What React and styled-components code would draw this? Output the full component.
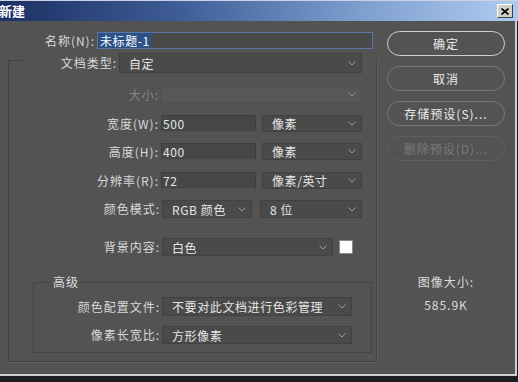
import React from "react";
import styled, { createGlobalStyle } from "styled-components";

const GlobalStyle = createGlobalStyle`
  html, body {
    margin: 0;
    padding: 0;
    background: #1f1f1f;
  }
  body {
    font-family: "Noto Sans CJK SC", "Noto Sans", sans-serif;
    font-size: 12px;
  }
`;

const Win = styled.div`
  width: 518px;
  height: 382px;
  display: flex;
  flex-direction: column;
  overflow: hidden;
  background: #1f1f1f;
`;

const TitleBar = styled.div`
  height: 21px;
  flex: none;
  box-sizing: border-box;
  border-top: 1px solid #c9d3e3;
  display: flex;
  align-items: center;
  justify-content: space-between;
  padding-right: 5px;
  background: linear-gradient(90deg, #1c3063 0%, #3f5d97 35%, #7f9fd0 70%, #aecbef 100%);
`;

const Title = styled.span`
  color: #fff;
  font-weight: bold;
  font-size: 13px;
  line-height: 16px;
  margin-left: -1px;
`;

const CloseBtn = styled.div`
  width: 16px;
  height: 14px;
  box-sizing: border-box;
  background: #d4d0c8;
  border: 1px solid;
  border-color: #ffffff #404040 #404040 #ffffff;
  display: flex;
  align-items: center;
  justify-content: center;
`;

const Body = styled.div`
  width: 517px;
  height: 355px;
  flex: none;
  box-sizing: border-box;
  background: #535353;
  border-right: 2px solid #cfcfcf;
  border-bottom: 2px solid #cfcfcf;
  display: flex;
`;

const FormCol = styled.div`
  width: 380px;
  flex: none;
  display: flex;
  flex-direction: column;
`;

const SideCol = styled.div`
  flex: 1;
  display: flex;
  flex-direction: column;
  padding-left: 7px;
`;

const Row = styled.div`
  display: flex;
  align-items: center;
  height: ${(p) => p.$h || 17}px;
  margin-top: ${(p) => p.$mt || 0}px;
`;

const Label = styled.div`
  width: ${(p) => p.$w}px;
  flex: none;
  margin-right: 2px;
  text-align: right;
  white-space: nowrap;
  line-height: 16px;
  letter-spacing: 1px;
  color: ${(p) => (p.$disabled ? "#858585" : "#d8d8d8")};
`;

const Field = styled.div`
  width: ${(p) => p.$w}px;
  height: 100%;
  flex: none;
  box-sizing: border-box;
  background: #474747;
  border: 1px solid #3e3e3e;
  border-bottom-color: #4f4f4f;
  color: #e6e6e6;
  padding-left: 1px;
  display: flex;
  align-items: center;
  line-height: 15px;
  letter-spacing: 0.6px;
`;

const NameField = styled(Field)`
  background: #4a4a4a;
  border: 1px solid #5877a8;
`;

const Selected = styled.span`
  background: #2d5288;
  color: #fff;
  padding: 0 1px;
`;

const Select = styled.div`
  width: ${(p) => p.$w}px;
  height: 100%;
  flex: none;
  box-sizing: border-box;
  margin-left: ${(p) => p.$ml || 0}px;
  background: ${(p) => (p.$disabled ? "#575757" : "#4a4a4a")};
  border: 1px solid ${(p) => (p.$disabled ? "#505050" : "#414141")};
  color: #e6e6e6;
  padding: 0 5px 0 9px;
  display: flex;
  align-items: center;
  justify-content: space-between;
  line-height: 15px;
  letter-spacing: 0.6px;
  white-space: nowrap;
`;

const Swatch = styled.div`
  width: 14px;
  height: 14px;
  margin-left: 6px;
  background: #fff;
  border: 1px solid #8a8a8a;
  box-sizing: border-box;
`;

const Group = styled.div`
  position: relative;
  margin: 11px 0 0 8px;
  width: 369px;
  box-sizing: border-box;
  border: 1px solid #444;
  border-top: none;
  box-shadow: 1px 1px 0 #5f5f5f;
  padding-bottom: 8px;
  &::before {
    content: "";
    position: absolute;
    top: 0;
    left: -1px;
    width: 14px;
    height: 1px;
    background: #444;
  }
`;

const Fieldset = styled.fieldset`
  margin: 18px 4px 0 24px;
  padding: 0 0 8px 0;
  border: 1px solid #454545;
  min-width: 0;
`;

const Legend = styled.legend`
  margin-left: 17px;
  padding: 0 2px;
  color: #dcdcdc;
  line-height: 16px;
  letter-spacing: 1px;
`;

const Button = styled.div`
  width: 118px;
  height: 25px;
  box-sizing: border-box;
  margin-top: ${(p) => p.$mt || 10}px;
  border-radius: 13px;
  border: ${(p) => (p.$primary ? "1.5px solid #cfcfcf" : p.$disabled ? "1px solid #5e5e5e" : "1px solid #777")};
  color: ${(p) => (p.$disabled ? "#7a7a7a" : "#ececec")};
  display: flex;
  align-items: center;
  justify-content: center;
  line-height: 16px;
  letter-spacing: 1px;
`;

const Info = styled.div`
  width: 118px;
  text-align: center;
  color: #dcdcdc;
  line-height: 16px;
  letter-spacing: 1px;
  margin-top: ${(p) => p.$mt}px;
`;

const Chevron = () => (
  <svg width="8" height="5" viewBox="0 0 8 5">
    <polyline points="0.5,0.5 4,4 7.5,0.5" fill="none" stroke="#9c9c9c" strokeWidth="1" />
  </svg>
);

const Drop = ({ w, ml, disabled, children }) => (
  <Select $w={w} $ml={ml} $disabled={disabled}>
    <span>{children}</span>
    <Chevron />
  </Select>
);

export default function App() {
  return (
    <Win>
      <GlobalStyle />
      <TitleBar>
        <Title>新建</Title>
        <CloseBtn>
          <svg width="8" height="7" viewBox="0 0 8 7">
            <path d="M0.5 0.5 L7.5 6.5 M7.5 0.5 L0.5 6.5" stroke="#000" strokeWidth="1.6" />
          </svg>
        </CloseBtn>
      </TitleBar>
      <Body>
        <FormCol>
          <Row $mt={11} $h={17}>
            <Label $w={95}>名称(N):</Label>
            <NameField $w={276}>
              <Selected>未标题-1</Selected>
            </NameField>
          </Row>
          <Group>
            <Row $mt={-7} $h={20}>
              <Label $w={108}>文档类型:</Label>
              <Drop w={243}>自定</Drop>
            </Row>
            <Row $mt={13}>
              <Label $w={150} $disabled>大小:</Label>
              <Drop w={201} disabled></Drop>
            </Row>
            <Row $mt={12}>
              <Label $w={150}>宽度(W):</Label>
              <Field $w={95}>500</Field>
              <Drop w={100} ml={6}>像素</Drop>
            </Row>
            <Row $mt={11}>
              <Label $w={150}>高度(H):</Label>
              <Field $w={95}>400</Field>
              <Drop w={100} ml={6}>像素</Drop>
            </Row>
            <Row $mt={12}>
              <Label $w={150}>分辨率(R):</Label>
              <Field $w={95}>72</Field>
              <Drop w={100} ml={6}>像素/英寸</Drop>
            </Row>
            <Row $mt={11} $h={18}>
              <Label $w={151}>颜色模式:</Label>
              <Drop w={90}>RGB 颜色</Drop>
              <Drop w={102} ml={8}>8 位</Drop>
            </Row>
            <Row $mt={20} $h={18}>
              <Label $w={151}>背景内容:</Label>
              <Drop w={171}>白色</Drop>
              <Swatch />
            </Row>
            <Fieldset>
              <Legend>高级</Legend>
              <Row $mt={7} $h={19}>
                <Label $w={126}>颜色配置文件:</Label>
                <Drop w={190}>不要对此文档进行色彩管理</Drop>
              </Row>
              <Row $mt={10} $h={18}>
                <Label $w={126}>像素长宽比:</Label>
                <Drop w={190}>方形像素</Drop>
              </Row>
            </Fieldset>
          </Group>
        </FormCol>
        <SideCol>
          <Button $primary $mt={10}>确定</Button>
          <Button>取消</Button>
          <Button>存储预设(S)...</Button>
          <Button $disabled>删除预设(D)...</Button>
          <Info $mt={113}>图像大小:</Info>
          <Info $mt={7}>585.9K</Info>
        </SideCol>
      </Body>
    </Win>
  );
}
